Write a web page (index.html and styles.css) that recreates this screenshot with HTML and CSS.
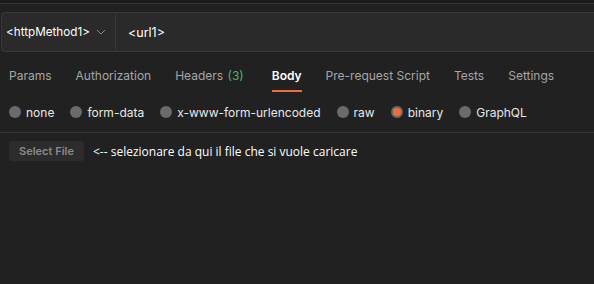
FILE: index.html
```html
<!DOCTYPE html>
<html lang="it">
<head>
  <meta charset="UTF-8">
  <meta name="viewport" content="width=device-width, initial-scale=1.0">
  <title>Request</title>
  <link rel="stylesheet" href="styles.css">
</head>
<body>
  <div class="topstrip"></div>
  <div class="request-bar">
    <div class="url-box">
      <div class="method">
        <span>&lt;httpMethod1&gt;</span>
        <svg class="chevron" width="10" height="6" viewBox="0 0 10 6"><path d="M1 1l4 4 4-4" fill="none" stroke="#8c8c8c" stroke-width="1"/></svg>
      </div>
      <div class="url">&lt;url1&gt;</div>
    </div>
  </div>

  <div class="tabs">
    <div class="tab">Params</div>
    <div class="tab">Authorization</div>
    <div class="tab with-count">Headers <span class="count">(3)</span></div>
    <div class="tab active">Body</div>
    <div class="tab">Pre-request Script</div>
    <div class="tab">Tests</div>
    <div class="tab">Settings</div>
  </div>

  <div class="body-types">
    <label class="radio"><span class="dot"></span>none</label>
    <label class="radio"><span class="dot"></span>form-data</label>
    <label class="radio"><span class="dot"></span>x-www-form-urlencoded</label>
    <label class="radio"><span class="dot"></span>raw</label>
    <label class="radio"><span class="dot checked"></span>binary</label>
    <label class="radio"><span class="dot"></span>GraphQL</label>
  </div>

  <div class="file-row">
    <button class="select-file">Select File</button>
    <span class="note">&lt;-- selezionare da qui il file che si vuole caricare</span>
  </div>
</body>
</html>
```

FILE: styles.css
```css
body {
  margin: 0;
  background: #212121;
  font-family: Inter, "Noto Sans", sans-serif;
  color: #a6a6a6;
  height: 284px;
  overflow: hidden;
}

.topstrip {
  height: 3px;
  background: #1b1b1b;
  border-bottom: 1px solid #353535;
}

.request-bar {
  padding: 8px 0 0 1px;
  overflow: hidden;
}

.url-box {
  display: flex;
  height: 38px;
  border: 1px solid #383838;
  border-right: none;
  border-radius: 4px 0 0 4px;
  background: #2a2a2a;
}

.method {
  display: flex;
  align-items: center;
  width: 114px;
  padding-left: 4px;
  box-sizing: border-box;
  border-right: 1px solid #383838;
  color: #ffffff;
  font-size: 11.7px;
}

.chevron {
  margin-left: 6px;
}

.url {
  display: flex;
  align-items: center;
  padding-left: 12px;
  color: #ffffff;
  font-size: 12.5px;
}

.tabs {
  display: flex;
  gap: 24px;
  padding: 16px 0 0 9px;
  font-size: 12px;
}

.tab {
  padding-bottom: 7px;
  border-bottom: 2px solid transparent;
}

.tab.with-count {
  margin-right: 4px;
}

.tab.active {
  color: #ffffff;
  font-weight: 600;
  border-bottom-color: #f26b3a;
}

.count {
  color: #49b86a;
  margin-left: 1px;
}

.body-types {
  display: flex;
  gap: 16px;
  padding: 10px 0 0 9px;
  height: 30px;
  border-bottom: 1px solid #333333;
  font-size: 12px;
  color: #e8e8e8;
}

.radio {
  display: flex;
  align-items: center;
  gap: 5px;
  height: 20px;
}

.dot {
  width: 12px;
  height: 12px;
  border-radius: 50%;
  background: #6b6b6b;
  box-sizing: border-box;
}

.dot.checked {
  background: #f26b3a;
  border: 2px solid #6b6b6b;
}

.file-row {
  display: flex;
  align-items: center;
  gap: 9px;
  padding: 8px 0 0 9px;
}

.select-file {
  width: 75px;
  height: 20px;
  border: none;
  border-radius: 3px;
  background: #2c2c2c;
  color: #8a8a8a;
  font-family: Inter, sans-serif;
  font-size: 11px;
  font-weight: 600;
  padding: 0;
}

.note {
  font-family: "Open Sans", sans-serif;
  font-size: 12px;
  color: #ffffff;
}
```
